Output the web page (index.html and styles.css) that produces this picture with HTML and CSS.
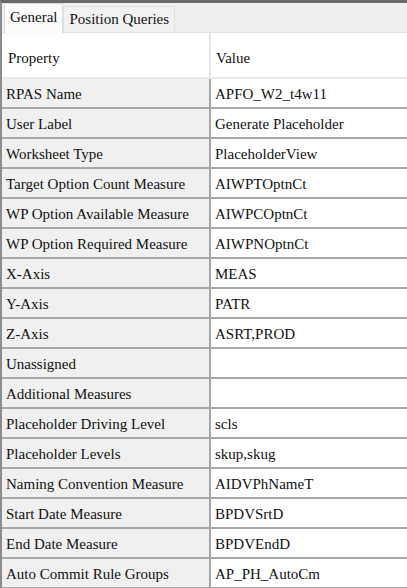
FILE: index.html
```html
<!DOCTYPE html>
<html lang="en">
<head>
    <meta charset="UTF-8">
    <meta name="viewport" content="width=device-width, initial-scale=1.0">
    <title>Properties</title>
    <link rel="stylesheet" href="styles.css">
</head>
<body>
    <div class="panel">
        <div class="tabs">
            <div class="tab active">General</div>
            <div class="tab">Position Queries</div>
        </div>

        <table class="props">
            <tr class="head">
                <td class="name">Property</td>
                <td class="value">Value</td>
            </tr>
            <tr><td class="name">RPAS Name</td><td class="value">APFO_W2_t4w11</td></tr>
            <tr><td class="name">User Label</td><td class="value">Generate Placeholder</td></tr>
            <tr><td class="name">Worksheet Type</td><td class="value">PlaceholderView</td></tr>
            <tr><td class="name">Target Option Count Measure</td><td class="value">AIWPTOptnCt</td></tr>
            <tr><td class="name">WP Option Available Measure</td><td class="value">AIWPCOptnCt</td></tr>
            <tr><td class="name">WP Option Required Measure</td><td class="value">AIWPNOptnCt</td></tr>
            <tr><td class="name">X-Axis</td><td class="value">MEAS</td></tr>
            <tr><td class="name">Y-Axis</td><td class="value">PATR</td></tr>
            <tr><td class="name">Z-Axis</td><td class="value">ASRT,PROD</td></tr>
            <tr><td class="name">Unassigned</td><td class="value"></td></tr>
            <tr><td class="name">Additional Measures</td><td class="value"></td></tr>
            <tr><td class="name">Placeholder Driving Level</td><td class="value">scls</td></tr>
            <tr><td class="name">Placeholder Levels</td><td class="value">skup,skug</td></tr>
            <tr><td class="name">Naming Convention Measure</td><td class="value">AIDVPhNameT</td></tr>
            <tr><td class="name">Start Date Measure</td><td class="value">BPDVSrtD</td></tr>
            <tr><td class="name">End Date Measure</td><td class="value">BPDVEndD</td></tr>
            <tr><td class="name">Auto Commit Rule Groups</td><td class="value">AP_PH_AutoCm</td></tr>
        </table>
    </div>
</body>
</html>
```

FILE: styles.css
```css
html, body {
    margin: 0;
    padding: 0;
    background: #fff;
}
body {
    font-family: "Liberation Serif", "Times New Roman", serif;
    font-size: 15px;
    color: #111;
    overflow: hidden;
}
.panel {
    width: 407px;
    height: 588px;
    box-sizing: border-box;
    border-top: 3px solid #6a6a6a;
    border-left: 2px solid #8c8c8c;
    background: #fff;
    overflow: hidden;
}
.tabs {
    display: flex;
    align-items: flex-start;
    height: 29px;
    background: #efefef;
    border-bottom: 1px solid #e2e2e2;
    padding-left: 2px;
}
.tab {
    height: 24px;
    line-height: 24px;
    margin-top: 3px;
    padding: 0 5px;
    background: #f2f2f2;
    border: 1px solid #e0e0e0;
    border-bottom: none;
}
.tab.active {
    height: 30px;
    line-height: 26px;
    margin-top: 0;
    background: #fbfbfb;
    border-color: #dcdcdc;
    position: relative;
    z-index: 1;
}
.props {
    width: 100%;
    border-collapse: collapse;
    table-layout: fixed;
}
.props td {
    height: 26px;
    padding: 2px 0 0 4px;
    border-bottom: 2px solid #a8a8a8;
    white-space: nowrap;
    overflow: hidden;
}
.props .name {
    width: 201px;
    background: #f0f0f0;
    border-right: 2px solid #a8a8a8;
}
.props .value {
    background: #fff;
    padding-left: 4px;
}
.props .head td {
    height: 38px;
    padding: 6px 0 0 6px;
    background: #fff;
    border-bottom: 2px solid #e8e8e8;
    border-right-color: #e6e6e6;
}
.props .head .value {
    padding-left: 5px;
}
```
